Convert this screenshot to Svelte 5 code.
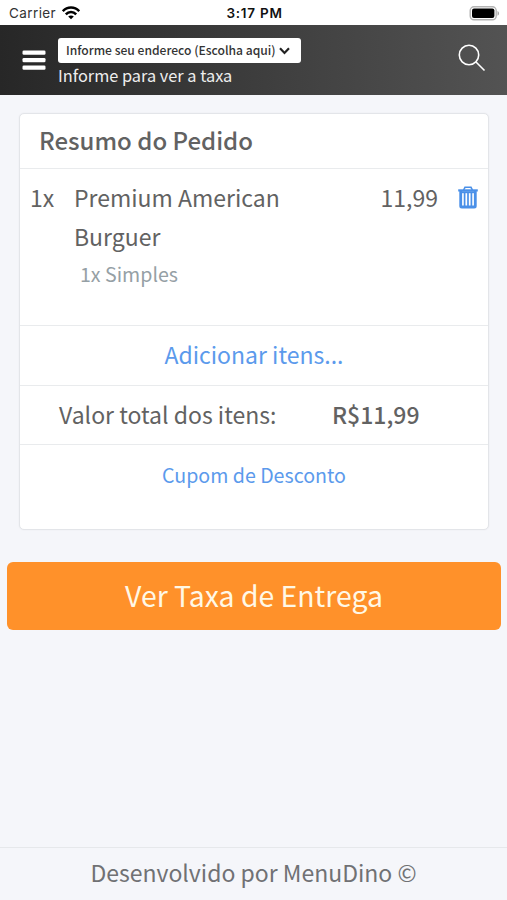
<script>
  let items = [
    { qty: 1, name: 'Premium American Burguer', price: '11,99', extra: '1x Simples' }
  ];
  let total = 'R$11,99';
</script>

<div class="screen">
  <div class="status">
    <div class="carrier">
      <span>Carrier</span>
      <svg width="18" height="14" viewBox="0 0 18 14" fill="none" stroke="#000" stroke-width="2.5">
        <path d="M.8 5.2C5.3.4 12.7.4 17.2 5.2" />
        <path d="M3.8 8.3C6.7 5.3 11.3 5.3 14.2 8.3" />
        <path d="M9 13.3L6.2 10.5C7.8 9 10.2 9 11.8 10.5Z" fill="#000" stroke="none" />
      </svg>
    </div>
    <strong class="time">3:17 PM</strong>
    <svg class="battery" width="31" height="15" viewBox="0 0 31 15">
      <rect x="1.2" y=".8" width="26" height="13" rx="3.8" fill="#fff" stroke="#b4b4b4" stroke-width="1.4" />
      <rect x="3" y="2.6" width="22.4" height="9.4" rx="2" fill="#000" />
      <path d="M28.5 5V9.8C30.6 8.8 30.6 6 28.5 5Z" fill="#a9a9a9" />
    </svg>
  </div>

  <header>
    <button class="menu" aria-label="Menu">
      <svg width="24" height="20" viewBox="0 0 24 20" fill="#fff">
        <rect x=".5" y=".5" width="23" height="4.2" rx="1.3" />
        <rect x=".5" y="8" width="23" height="4.2" rx="1.3" />
        <rect x=".5" y="15.5" width="23" height="4.2" rx="1.3" />
      </svg>
    </button>
    <div class="address">
      <button class="picker">
        <span>Informe seu endereco (Escolha aqui)</span>
        <svg width="11" height="8" viewBox="0 0 11 8" fill="none" stroke="#222" stroke-width="2.2">
          <path d="M1 1.3L5.5 5.9L10 1.3" />
        </svg>
      </button>
      <span class="hint">Informe para ver a taxa</span>
    </div>
    <button class="search" aria-label="Buscar">
      <svg width="28" height="28" viewBox="0 0 28 28" fill="none" stroke="#fff" stroke-width="1.6">
        <circle cx="11" cy="11" r="9.7" />
        <path d="M18 18L26.5 26.5" />
      </svg>
    </button>
  </header>

  <main>
    <section class="card">
      <h1>Resumo do Pedido</h1>
      {#each items as item}
        <div class="item">
          <span class="qty">{item.qty}x</span>
          <div class="name">
            {item.name}
            <div class="extra">{item.extra}</div>
          </div>
          <span class="price">{item.price}</span>
          <button class="trash" aria-label="Remover">
            <svg width="20" height="23" viewBox="0 0 20 23" fill="none" stroke="#4a90e8">
              <path d="M5.6 4L7 1.3H13L14.4 4" stroke-width="1.6" />
              <path d="M.2 4.4H19.8" stroke-width="2.2" />
              <path d="M2.7 5V19.9Q2.7 21 3.8 21H16.2Q17.3 21 17.3 19.9V5" stroke-width="2.8" />
              <path d="M3 6.2H17" stroke-width="2" />
              <path d="M6.6 7V20M10 7V20M13.4 7V20" stroke-width="1.7" />
            </svg>
          </button>
        </div>
      {/each}
      <a class="add" href="#itens">Adicionar itens...</a>
      <div class="total">
        <span class="label">Valor total dos itens:</span>
        <strong>{total}</strong>
      </div>
      <a class="coupon" href="#cupom">Cupom de Desconto</a>
    </section>
    <button class="submit">Ver Taxa de Entrega</button>
  </main>

  <footer>Desenvolvido por MenuDino ©</footer>
</div>

<style>
  :global(body) {
    background: #f5f6fa;
  }

  .screen {
    display: flex;
    flex-direction: column;
    height: 900px;
    background: #f5f6fa;
    color: #626262;
    font-family: "Noto Sans CJK SC", "Noto Sans CJK JP", sans-serif;
    font-size: 23px;
    overflow: hidden;
  }

  button {
    padding: 0;
    border: 0;
    background: none;
    font-family: inherit;
  }

  svg {
    display: block;
  }

  a {
    color: #5b9aec;
    text-decoration: none;
  }

  .status {
    display: grid;
    grid-template-columns: 1fr auto 1fr;
    align-items: center;
    flex: none;
    height: 25px;
    padding: 1px 7px 0 9px;
    box-sizing: border-box;
    background: #fff;
    color: #111;
    font-family: Inter, "Liberation Sans", sans-serif;
    font-size: 13.5px;
  }

  .carrier {
    display: flex;
    align-items: center;
    gap: 6px;
    color: #333;
    letter-spacing: 0.4px;
  }

  .time {
    font-weight: 600;
    letter-spacing: 0.75px;
  }

  .battery {
    justify-self: end;
  }

  header {
    display: flex;
    flex: none;
    height: 70px;
    padding: 0 21px 0 22px;
    box-sizing: border-box;
    background: linear-gradient(to right, #272727, #535353);
  }

  .menu {
    align-self: flex-start;
    margin-top: 25px;
  }

  .address {
    display: flex;
    flex: 1;
    flex-direction: column;
    align-items: flex-start;
    margin: 13px 0 0 12px;
  }

  .picker {
    display: flex;
    align-items: center;
    justify-content: space-between;
    width: 243px;
    height: 25px;
    padding: 0 11px 2px 8px;
    border-radius: 3px;
    background: #fff;
    color: #333;
    font-size: 12.1px;
    font-weight: 500;
  }

  .picker svg {
    margin-top: 2px;
  }

  .hint {
    color: #eee;
    font-size: 16.35px;
    line-height: 24px;
  }

  .search {
    align-self: flex-start;
    margin-top: 19px;
  }

  main {
    flex: 1;
  }

  .card {
    height: 417px;
    margin: 18px 18px 0 19px;
    border: 1px solid #e3e5e9;
    border-radius: 5px;
    box-sizing: border-box;
    background: #fff;
    box-shadow: 0 0 2px rgba(0, 0, 0, 0.06);
  }

  h1 {
    height: 55px;
    margin: 0;
    padding-left: 19px;
    border-bottom: 1px solid #e9ebed;
    box-sizing: border-box;
    font-size: 24px;
    font-weight: 500;
    line-height: 52px;
  }

  .item {
    display: flex;
    height: 157px;
    padding: 9px 10px 0;
    border-bottom: 1px solid #e9ebed;
    box-sizing: border-box;
    line-height: 39px;
  }

  .qty {
    width: 44px;
  }

  .name {
    width: 240px;
  }

  .extra {
    padding-left: 6px;
    color: #95a0a5;
    font-size: 19.6px;
    line-height: 35px;
  }

  .price {
    flex: 1;
    text-align: right;
  }

  .trash {
    align-self: flex-start;
    margin: 8px 0 0 20px;
  }

  .add,
  .coupon {
    display: block;
    text-align: center;
  }

  .add {
    height: 60px;
    border-bottom: 1px solid #e9ebed;
    box-sizing: border-box;
    line-height: 57px;
  }

  .total {
    display: flex;
    height: 59px;
    padding-left: 39px;
    border-bottom: 1px solid #e9ebed;
    box-sizing: border-box;
    line-height: 56px;
  }

  .label {
    width: 273px;
  }

  .total strong {
    font-weight: 500;
  }

  .coupon {
    font-size: 19.6px;
    line-height: 60px;
  }

  .submit {
    display: block;
    width: 494px;
    height: 68px;
    margin: 32px 0 0 7px;
    padding-bottom: 2px;
    border-radius: 6px;
    background: #ff912a;
    color: #fff8e6;
    font-size: 28.4px;
    line-height: 66px;
  }

  footer {
    flex: none;
    height: 53px;
    border-top: 1px solid #e6e8eb;
    box-sizing: border-box;
    color: #707174;
    line-height: 49px;
    text-align: center;
  }
</style>
